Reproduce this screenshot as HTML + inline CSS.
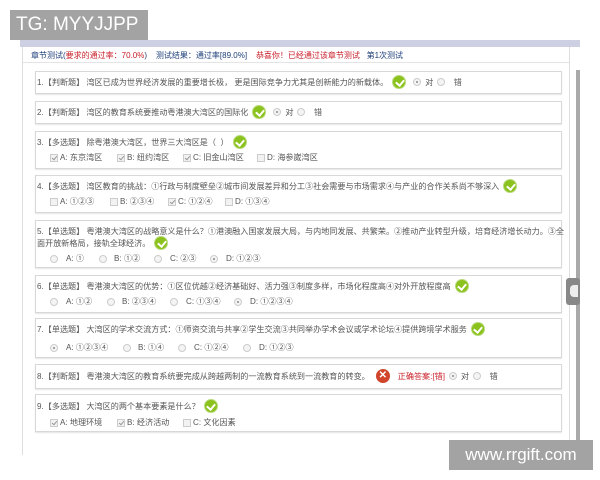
<!DOCTYPE html>
<html><head><meta charset="utf-8"><style>
*{margin:0;padding:0;box-sizing:border-box}
body{width:600px;height:480px;background:#fff;position:relative;overflow:hidden;font-family:"Liberation Sans","Noto Sans CJK SC",sans-serif;font-size:8.1px;color:#555}
.a{position:absolute;white-space:nowrap}
.ln{position:absolute;left:37px;white-space:nowrap;display:flex;align-items:center;height:14px}
.box{position:absolute;left:35px;width:527px;border:1px solid #d8d8d8;box-shadow:0 1px 1px #e6e6e6}
.ck{position:relative;display:inline-block;width:14px;height:14px;border-radius:50%;background:#8cc21e;border:1px solid #b8da7a;margin:0 3px 0 4px;flex:none}
.ck:after{content:"";position:absolute;left:3.5px;top:2px;width:4px;height:6px;border:solid #fff;border-width:0 2px 2px 0;transform:rotate(40deg)}
.r{position:absolute;width:8px;height:8px;border-radius:50%;border:1px solid #ccc;background:#f4f4f4}
.ln .r,.ln .c{position:relative;display:inline-block;margin:0 4px;flex:none}
.r.s:after{content:"";position:absolute;left:2px;top:2px;width:2px;height:2px;border-radius:50%;background:#888}
.c{position:absolute;width:8px;height:8px;border:1px solid #ccc;background:#f2f2f2}
.c.s:after{content:"";position:absolute;left:1.5px;top:0;width:2px;height:4px;border:solid #999;border-width:0 1px 1px 0;transform:rotate(40deg)}
</style></head><body>
<div class="a" style="left:20px;top:40px;width:560px;height:7px;background:#cdd0e2"></div>
<div class="a" style="left:22px;top:47px;width:548px;height:408px;border-left:1px solid #ddd;border-right:1px solid #ddd"></div>
<div class="a" style="left:23px;top:62px;width:546px;height:1px;background:#e4e4e4"></div>
<div class="a" style="left:576px;top:70px;width:4px;height:385px;background:#a9a9a9"></div>
<div class="a" style="left:566px;top:278px;width:14px;height:27px;background:#888;border-radius:3px"></div>
<div class="a" style="left:570px;top:285px;width:8px;height:12px;background:#eee;border-radius:4px 0 0 4px"></div>

<div class="a" style="left:31px;top:50px;font-size:8px;color:#1d3f7a">章节测试(<span style="color:#c8202a">要求的通过率：70.0%</span>)&nbsp;&nbsp;&nbsp;&nbsp;测试结果：通过率[89.0%]&nbsp;&nbsp;&nbsp;&nbsp;<span style="color:#c8202a">恭喜你！已经通过该章节测试</span>&nbsp;&nbsp;&nbsp;第1次测试</div>

<div class="box" style="top:71px;height:23px"></div>
<div class="ln" style="top:75px">1.【判断题】 湾区已成为世界经济发展的重要增长极， 更是国际竞争力尤其是创新能力的新载体。<span class="ck"></span><span class="r s"></span>对<span class="r"></span>&nbsp;&nbsp;错</div>

<div class="box" style="top:101px;height:23px"></div>
<div class="ln" style="top:105px">2.【判断题】 湾区的教育系统要推动粤港澳大湾区的国际化<span class="ck"></span><span class="r s"></span>对<span class="r"></span>&nbsp;&nbsp;错</div>

<div class="box" style="top:131px;height:38px"></div>
<div class="ln" style="top:135px">3.【多选题】 除粤港澳大湾区，世界三大湾区是（ &nbsp;）<span class="ck"></span></div>
<div class="c s" style="left:50px;top:154px"></div><div class="a" style="left:60px;top:152px">A: 东京湾区</div>
<div class="c s" style="left:117px;top:154px"></div><div class="a" style="left:127px;top:152px">B: 纽约湾区</div>
<div class="c s" style="left:183px;top:154px"></div><div class="a" style="left:193px;top:152px">C: 旧金山湾区</div>
<div class="c" style="left:257px;top:154px"></div><div class="a" style="left:267px;top:152px">D: 海参崴湾区</div>

<div class="box" style="top:175px;height:38px"></div>
<div class="ln" style="top:179px">4.【多选题】 湾区教育的挑战：①行政与制度壁垒②城市间发展差异和分工③社会需要与市场需求④与产业的合作关系尚不够深入<span class="ck"></span></div>
<div class="c" style="left:50px;top:198px"></div><div class="a" style="left:60px;top:196px">A: ①②③</div>
<div class="c" style="left:110px;top:198px"></div><div class="a" style="left:120px;top:196px">B: ②③④</div>
<div class="c s" style="left:168px;top:198px"></div><div class="a" style="left:178px;top:196px">C: ①②④</div>
<div class="c" style="left:225px;top:198px"></div><div class="a" style="left:235px;top:196px">D: ①③④</div>

<div class="box" style="top:220px;height:48px"></div>
<div class="a" style="left:37px;top:226px">5.【单选题】 粤港澳大湾区的战略意义是什么？①港澳融入国家发展大局，与内地同发展、共繁荣。②推动产业转型升级，培育经济增长动力。③全</div>
<div class="ln" style="top:236px">面开放新格局，接轨全球经济。<span class="ck"></span></div>
<div class="r" style="left:50px;top:255px"></div><div class="a" style="left:66px;top:253px">A: ①</div>
<div class="r" style="left:99px;top:255px"></div><div class="a" style="left:114px;top:253px">B: ①②</div>
<div class="r" style="left:154px;top:255px"></div><div class="a" style="left:170px;top:253px">C: ②③</div>
<div class="r s" style="left:210px;top:255px"></div><div class="a" style="left:226px;top:253px">D: ①②③</div>

<div class="box" style="top:275px;height:38px"></div>
<div class="ln" style="top:279px">6.【单选题】 粤港澳大湾区的优势：①区位优越②经济基础好、活力强③制度多样，市场化程度高④对外开放程度高<span class="ck"></span></div>
<div class="r" style="left:50px;top:298px"></div><div class="a" style="left:66px;top:296px">A: ①②</div>
<div class="r" style="left:107px;top:298px"></div><div class="a" style="left:122px;top:296px">B: ②③④</div>
<div class="r" style="left:170px;top:298px"></div><div class="a" style="left:186px;top:296px">C: ①③④</div>
<div class="r s" style="left:234px;top:298px"></div><div class="a" style="left:250px;top:296px">D: ①②③④</div>

<div class="box" style="top:318px;height:40px"></div>
<div class="ln" style="top:322px">7.【单选题】 大湾区的学术交流方式：①师资交流与共享②学生交流③共同举办学术会议或学术论坛④提供跨境学术服务<span class="ck"></span></div>
<div class="r s" style="left:50px;top:344px"></div><div class="a" style="left:66px;top:342px">A: ①②③④</div>
<div class="r" style="left:123px;top:344px"></div><div class="a" style="left:138px;top:342px">B: ①④</div>
<div class="r" style="left:178px;top:344px"></div><div class="a" style="left:194px;top:342px">C: ①②④</div>
<div class="r" style="left:243px;top:344px"></div><div class="a" style="left:259px;top:342px">D: ①②③</div>

<div class="box" style="top:364px;height:25px"></div>
<div class="ln" style="top:369px">8.【判断题】 粤港澳大湾区的教育系统要完成从跨越两制的一流教育系统到一流教育的转变。<span style="display:inline-block;width:14px;height:14px;border-radius:50%;background:#d0452c;color:#fff;font-size:10px;font-weight:bold;text-align:center;line-height:14px;margin:0 8px 0 6px">✕</span><span style="color:#c8202a">正确答案:[错]</span><span class="r s"></span>对<span class="r"></span>&nbsp;&nbsp;错</div>

<div class="box" style="top:394px;height:38px"></div>
<div class="ln" style="top:399px">9.【多选题】 大湾区的两个基本要素是什么？<span class="ck"></span></div>
<div class="c s" style="left:50px;top:419px"></div><div class="a" style="left:60px;top:417px">A: 地理环境</div>
<div class="c s" style="left:117px;top:419px"></div><div class="a" style="left:127px;top:417px">B: 经济活动</div>
<div class="c" style="left:183px;top:419px"></div><div class="a" style="left:193px;top:417px">C: 文化因素</div>

<div class="a" style="left:10px;top:10px;width:138px;height:30px;background:#a3a3a3;color:#fff;font-size:19px;line-height:30px;padding-left:6px">TG: MYYJJPP</div>
<div class="a" style="left:449px;top:440px;width:144px;height:30px;background:#a3a3a3;color:#fff;font-size:17px;line-height:30px;text-align:center">www.rrgift.com</div>
</body></html>
